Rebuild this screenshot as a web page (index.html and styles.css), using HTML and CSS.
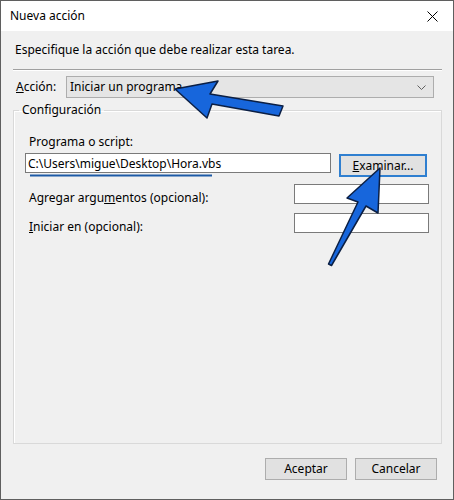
FILE: index.html
```html
<!DOCTYPE html>
<html lang="es">
<head>
    <meta charset="UTF-8">
    <title>Nueva acción</title>
    <link rel="stylesheet" href="styles.css">
</head>
<body>
    <div class="window">
        <div class="titlebar">
            <span class="title">Nueva acción</span>
            <svg class="close" width="11" height="11" viewBox="0 0 11 11">
                <path d="M0.5 0.5 L10.5 10.5 M10.5 0.5 L0.5 10.5" stroke="#000" stroke-width="1" fill="none"/>
            </svg>
        </div>
        <div class="content">
            <p class="instructions">Especifique la acción que debe realizar esta tarea.</p>
            <div class="separator"></div>
            <div class="action-row">
                <label class="action-label"><u>A</u>cción:</label>
                <div class="combo">
                    <span>Iniciar un programa</span>
                    <svg width="9" height="5" viewBox="0 0 9 5">
                        <path d="M0.5 0.5 L4.5 4.5 L8.5 0.5" stroke="#606060" stroke-width="1" fill="none"/>
                    </svg>
                </div>
            </div>
            <fieldset class="group">
                <legend>Configuración</legend>
                <div class="field-label">Pro<u>g</u>rama o script:</div>
                <div class="row">
                    <div class="input wide">C:\Users\migue\Desktop\Hora.vbs</div>
                    <button class="btn focused"><u>E</u>xaminar...</button>
                </div>
                <div class="row">
                    <span class="row-label">Agregar argu<u>m</u>entos (opcional):</span>
                    <div class="input small"></div>
                </div>
                <div class="row">
                    <span class="row-label"><u>I</u>niciar en (opcional):</span>
                    <div class="input small"></div>
                </div>
            </fieldset>
            <div class="footer">
                <button class="btn">Aceptar</button>
                <button class="btn">Cancelar</button>
            </div>
        </div>

        <!-- annotations drawn over the dialog -->
        <svg class="marks" width="454" height="500" viewBox="0 0 454 500">
            <line x1="30" y1="175.5" x2="212" y2="175.5" stroke="#1d5aa6" stroke-width="2"/>
            <polygon class="arrow" points="175,89 218,81 210,94 283,106 279,116 212,104 207,118"/>
            <polygon class="arrow" points="380,168 378,213 366,206 331.5,265.5 328.5,264 358,202 347,198"/>
        </svg>
    </div>
</body>
</html>
```

FILE: styles.css
```css
body {
    margin: 0;
    background: #fff;
    font-family: "Noto Sans", "Open Sans", sans-serif;
    font-size: 12px;
    line-height: 16px;
    color: #000;
}
.window {
    position: relative;
    width: 454px;
    height: 500px;
    box-sizing: border-box;
    border: 1px solid #5f5f5f;
    display: flex;
    flex-direction: column;
}
.titlebar {
    height: 30px;
    flex-shrink: 0;
    background: #fff;
    display: flex;
    align-items: center;
    justify-content: space-between;
    padding: 0 15px 0 9px;
}
.title {
    margin-top: -1px;
}
.close {
    display: block;
}
.content {
    flex: 1;
    background: #f0f0f0;
    padding: 0 11px 0 12px;
    display: flex;
    flex-direction: column;
    min-height: 0;
}
.instructions {
    margin: 11px 0 0 2px;
}
.separator {
    margin-top: 11px;
    height: 1px;
    border-top: 1px solid #a0a0a0;
    background: #fff;
}
.action-row {
    margin-top: 5px;
    margin-right: 8px;
    display: flex;
    align-items: center;
}
.action-label {
    width: 50px;
    padding-left: 3px;
    margin-top: -1px;
}
.combo {
    flex: 1;
    height: 22px;
    box-sizing: border-box;
    border: 1px solid #adadad;
    background: #e5e5e5;
    display: flex;
    align-items: center;
    justify-content: space-between;
    padding: 0 7px 0 3px;
}
.combo svg {
    display: block;
}
.group {
    flex: 1;
    min-height: 0;
    margin: 4px 0 0 0;
    padding: 16px 12px 0 11px;
    border: 1px solid #d9d9d9;
    box-shadow: inset 1px 1px 0 #fff;
}
.group legend {
    margin-left: -6px;
    padding: 0 3px;
}
.field-label {
    margin-left: 4px;
}
.row {
    display: flex;
    align-items: flex-start;
    margin-top: 7px;
}
.field-label + .row {
    margin-top: 3px;
}
.row-label {
    margin: 6px 0 0 4px;
}
.input {
    height: 20px;
    box-sizing: border-box;
    border: 1px solid #7a7a7a;
    background: #fff;
    padding: 2px 2px 0;
    line-height: 16px;
}
.input.wide {
    width: 306px;
}
.input.small {
    width: 135px;
    margin-left: auto;
}
.btn {
    font: inherit;
    color: #000;
    height: 22px;
    padding: 0;
    background: #e1e1e1;
    border: 1px solid #adadad;
}
.btn.focused {
    width: 88px;
    height: 23px;
    margin: 1px 0 0 8px;
    border: 2px solid #2f7fd0;
}
.footer {
    display: flex;
    justify-content: flex-end;
    gap: 8px;
    margin-top: 14px;
    padding: 0 5px 19px 0;
}
.footer .btn {
    width: 82px;
}
.marks {
    position: absolute;
    top: -1px;
    left: -1px;
    pointer-events: none;
}
.arrow {
    fill: #1766dc;
    stroke: #0b1f44;
    stroke-width: 1.5;
    stroke-linejoin: round;
}
```
